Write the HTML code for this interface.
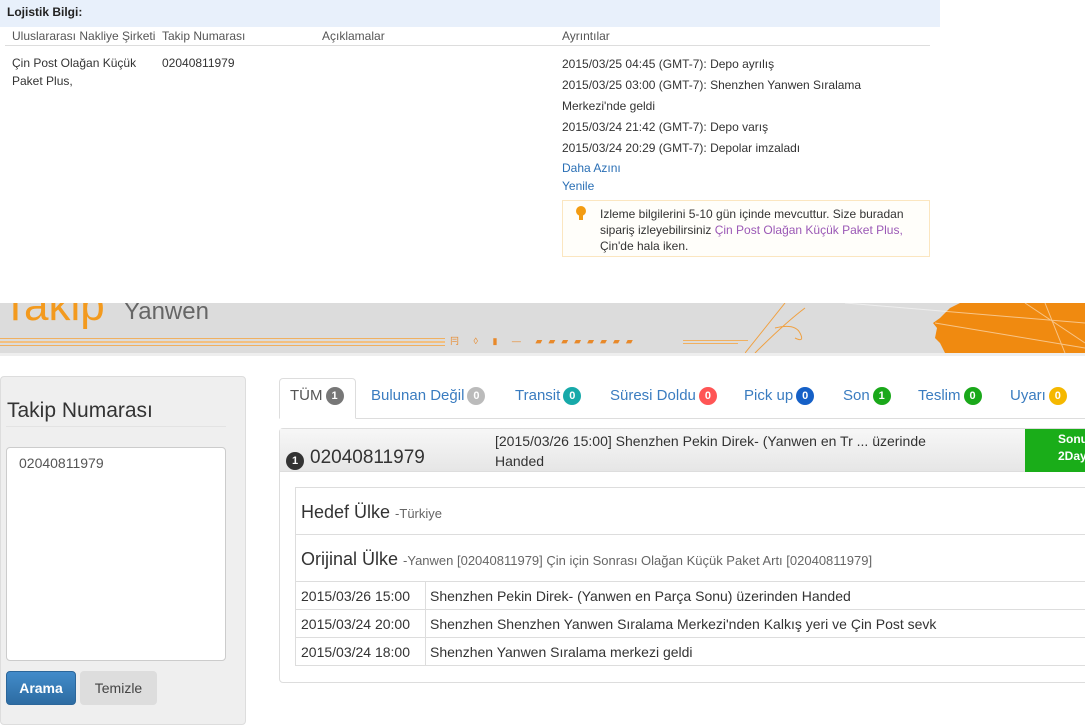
<!DOCTYPE html>
<html><head><meta charset="utf-8">
<style>
*{margin:0;padding:0;box-sizing:border-box}
body{width:1085px;height:725px;position:relative;overflow:hidden;background:#fff;font-family:"Liberation Sans",sans-serif;}
.a{position:absolute;white-space:nowrap}
.s{font-size:12px;color:#333}
.n{font-family:"Liberation Sans Narrow","Liberation Sans",sans-serif}
.bl{color:#2a6fb5}
.badge{display:inline-block;min-width:18px;height:18px;border-radius:9px;color:#fff;font-size:11px;font-weight:bold;text-align:center;line-height:18px;vertical-align:1px;margin-left:3px}
.tab{position:absolute;top:387px;font-size:15px;color:#3a7cc0}
.row{position:absolute;left:295px;width:800px;border:1px solid #ddd;border-right:none}
</style></head><body>
<div class="a" style="left:0;top:0;width:940px;height:27px;background:#e8f0fb"></div>
<div class="a" style="left:7px;top:5px;font-size:12px;font-weight:bold;color:#222">Lojistik Bilgi:</div>
<div class="a s" style="left:12px;top:29px;color:#555">Uluslararası Nakliye Şirketi</div>
<div class="a s" style="left:162px;top:29px;color:#555">Takip Numarası</div>
<div class="a s" style="left:322px;top:29px;color:#555">Açıklamalar</div>
<div class="a s" style="left:562px;top:29px;color:#555">Ayrıntılar</div>
<div class="a" style="left:5px;top:45px;width:925px;height:1px;background:#ddd"></div>
<div class="a s" style="left:12px;top:56px">Çin Post Olağan Küçük</div>
<div class="a s" style="left:12px;top:74px">Paket Plus,</div>
<div class="a s" style="left:162px;top:56px">02040811979</div>
<div class="a s" style="left:562px;top:57px">2015/03/25 04:45 (GMT-7): Depo ayrılış</div>
<div class="a s" style="left:562px;top:78px">2015/03/25 03:00 (GMT-7): Shenzhen Yanwen Sıralama</div>
<div class="a s" style="left:562px;top:99px">Merkezi'nde geldi</div>
<div class="a s" style="left:562px;top:120px">2015/03/24 21:42 (GMT-7): Depo varış</div>
<div class="a s" style="left:562px;top:141px">2015/03/24 20:29 (GMT-7): Depolar imzaladı</div>
<div class="a s bl" style="left:562px;top:161px">Daha Azını</div>
<div class="a s bl" style="left:562px;top:179px">Yenile</div>
<div class="a" style="left:562px;top:200px;width:368px;height:57px;border:1px solid #fbe6c0;background:#fffefa"></div>
<div class="a" style="left:576px;top:206px;width:10px;height:10px;border-radius:50%;background:#f39c12"></div>
<div class="a" style="left:579px;top:215px;width:4px;height:5px;background:#f39c12"></div>
<div class="a s" style="left:600px;top:206px;line-height:16px">Izleme bilgilerini 5-10 gün içinde mevcuttur. Size buradan<br>sipariş izleyebilirsiniz <span style="color:#9b59b6">Çin Post Olağan Küçük Paket Plus,</span><br>Çin'de hala iken.</div>

<div class="a" style="left:0;top:303px;width:1085px;height:50px;background:#dcdcdc;overflow:hidden">
 <div class="a" style="left:2px;top:-22px;font-size:44px;color:#f39a1e">Takip</div>
 <div class="a n" style="left:124px;top:-5px;font-size:24px;color:#666">Yanwen</div>
 <div class="a" style="left:0;top:35px;width:445px;height:1px;background:#f0b060"></div>
 <div class="a" style="left:0;top:38px;width:445px;height:2px;background:#f3c080"></div>
 <div class="a" style="left:0;top:42px;width:445px;height:1px;background:#f0b060"></div>
 <div class="a" style="left:450px;top:31px;font-size:9px;color:#e8892a;letter-spacing:6px">冃 ◊ ▮ — ▰▰▰▰▰▰▰▰</div>
 <div class="a" style="left:683px;top:37px;width:65px;height:1px;background:#f0b060"></div>
 <div class="a" style="left:683px;top:40px;width:55px;height:1px;background:#f0b060"></div>
 <svg class="a" style="left:745px;top:0" width="340" height="50"><path d="M0 50 L40 0 M10 50 Q40 20 60 5 M30 25 Q50 20 55 30 Q60 40 50 35" stroke="#f0a040" fill="none" stroke-width="1"/><path d="M195 15 L205 5 L215 0 L340 0 L340 50 L200 50 L195 40 L190 35 L192 25 L188 20 Z" fill="#f08a10"/><path d="M190 20 L340 45 M280 0 L340 40 M300 0 L320 50 M100 0 L340 20" stroke="#fff" stroke-width="1" opacity=".5" fill="none"/></svg>
</div>
<div class="a" style="left:0;top:353px;width:1085px;height:3px;background:#eee"></div>

<div class="a" style="left:0;top:376px;width:246px;height:349px;background:#efefef;border:1px solid #ddd;border-radius:4px"></div>
<div class="a" style="left:7px;top:399px;font-size:21px;color:#333">Takip Numarası</div>
<div class="a" style="left:6px;top:426px;width:220px;height:1px;background:#e3e3e3"></div>
<div class="a" style="left:6px;top:447px;width:220px;height:214px;background:#fff;border:1px solid #ccc;border-radius:4px"></div>
<div class="a" style="left:19px;top:455px;font-size:14px;color:#555">02040811979</div>
<div class="a" style="left:6px;top:671px;width:70px;height:34px;border-radius:4px;background:linear-gradient(#428bca,#2d6ca2);border:1px solid #2b669a;color:#fff;font-size:14px;font-weight:bold;text-align:center;line-height:32px">Arama</div>
<div class="a" style="left:80px;top:671px;width:77px;height:34px;border-radius:4px;background:#ddd;color:#444;font-size:14px;text-align:center;line-height:34px">Temizle</div>

<div class="a" style="left:279px;top:418px;width:806px;height:1px;background:#ddd"></div>
<div class="a" style="left:279px;top:378px;width:77px;height:41px;border:1px solid #ddd;border-bottom-color:#fff;border-radius:4px 4px 0 0;background:#fff"></div>
<div class="tab" style="left:290px;color:#555">TÜM<span class="badge" style="background:#777">1</span></div>
<div class="tab" style="left:371px">Bulunan Değil<span class="badge" style="background:#bbb">0</span></div>
<div class="tab" style="left:515px">Transit<span class="badge" style="background:#17a9a9">0</span></div>
<div class="tab" style="left:610px">Süresi Doldu<span class="badge" style="background:#f55">0</span></div>
<div class="tab" style="left:744px">Pick up<span class="badge" style="background:#1560c7">0</span></div>
<div class="tab" style="left:843px">Son<span class="badge" style="background:#1aa81a">1</span></div>
<div class="tab" style="left:918px">Teslim<span class="badge" style="background:#1aa81a">0</span></div>
<div class="tab" style="left:1010px">Uyarı<span class="badge" style="background:#f5b800">0</span></div>

<div class="a" style="left:279px;top:428px;width:820px;height:255px;border:1px solid #ddd;border-radius:4px"></div>
<div class="a" style="left:280px;top:429px;width:805px;height:43px;background:linear-gradient(#f7f7f7,#e6e6e6);border-bottom:1px solid #ddd"></div>
<div class="a" style="left:286px;top:452px;width:18px;height:18px;border-radius:9px;background:#333;color:#fff;font-size:11px;font-weight:bold;text-align:center;line-height:18px">1</div>
<div class="a" style="left:310px;top:447px;font-size:19px;color:#333">02040811979</div>
<div class="a" style="left:495px;top:431px;font-size:14px;color:#333;line-height:20px">[2015/03/26 15:00] Shenzhen Pekin Direk- (Yanwen en Tr ... üzerinde<br>Handed</div>
<div class="a" style="left:1025px;top:429px;width:60px;height:43px;background:#1aad19;color:#fff;font-size:12px;font-weight:bold;line-height:17px;padding:2px 0 0 33px">Sonu<br>2Day</div>

<div class="row" style="top:487px;height:48px"></div>
<div class="a" style="left:301px;top:502px;font-size:18px;color:#333">Hedef Ülke <span style="font-size:13px;color:#666">-Türkiye</span></div>
<div class="row" style="top:534px;height:48px"></div>
<div class="a" style="left:301px;top:549px;font-size:18px;color:#333">Orijinal Ülke <span style="font-size:13px;color:#666">-Yanwen [02040811979] Çin için Sonrası Olağan Küçük Paket Artı [02040811979]</span></div>
<div class="row" style="top:581px;height:29px"></div>
<div class="row" style="top:609px;height:29px"></div>
<div class="row" style="top:637px;height:29px"></div>
<div class="a" style="left:425px;top:581px;width:1px;height:85px;background:#ddd"></div>
<div class="a" style="left:301px;top:588px;font-size:14px;color:#333">2015/03/26 15:00</div>
<div class="a" style="left:430px;top:588px;font-size:14px;color:#333">Shenzhen Pekin Direk- (Yanwen en Parça Sonu) üzerinden Handed</div>
<div class="a" style="left:301px;top:616px;font-size:14px;color:#333">2015/03/24 20:00</div>
<div class="a" style="left:430px;top:616px;font-size:14px;color:#333">Shenzhen Shenzhen Yanwen Sıralama Merkezi'nden Kalkış yeri ve Çin Post sevk</div>
<div class="a" style="left:301px;top:644px;font-size:14px;color:#333">2015/03/24 18:00</div>
<div class="a" style="left:430px;top:644px;font-size:14px;color:#333">Shenzhen Yanwen Sıralama merkezi geldi</div>
</body></html>
